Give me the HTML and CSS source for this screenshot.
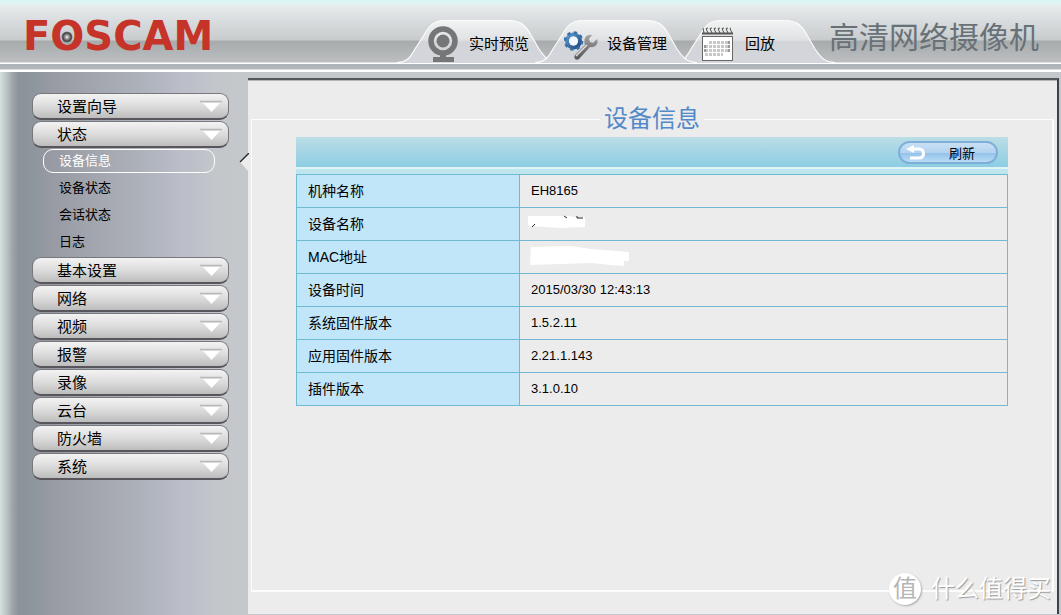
FILE: index.html
```html
<!DOCTYPE html>
<html lang="zh-CN">
<head>
<meta charset="utf-8">
<title>设备信息</title>
<link rel="stylesheet" href="styles.css">
</head>
<body>
<svg class="defs" width="0" height="0" aria-hidden="true">
  <defs>
    <linearGradient id="tabFill" x1="0" y1="0" x2="0" y2="1">
      <stop offset="0" stop-color="#f2f3f3"/>
      <stop offset=".46" stop-color="#dfe1e3"/>
      <stop offset=".5" stop-color="#d2d4d8"/>
      <stop offset="1" stop-color="#d3d6dc"/>
    </linearGradient>
    <radialGradient id="lens">
      <stop offset="0" stop-color="#f4f4f4"/>
      <stop offset=".3" stop-color="#aaa"/>
      <stop offset=".75" stop-color="#444"/>
      <stop offset="1" stop-color="#777"/>
    </radialGradient>
    <linearGradient id="gear" x1="0" y1="0" x2="1" y2="1">
      <stop offset="0" stop-color="#5c9dcb"/>
      <stop offset="1" stop-color="#1f4783"/>
    </linearGradient>
    <linearGradient id="steel" x1="0" y1="0" x2="0" y2="1">
      <stop offset="0" stop-color="#a5a5a5"/>
      <stop offset="1" stop-color="#555"/>
    </linearGradient>
    <symbol id="tabShape" viewBox="0 0 162 43">
      <path d="M0 43C10 42 13 38 18 29L27 15C33 4 38 .5 48 .5H112C122 .5 128 4 134 15L142 29C148 38 152 42 162 43Z" fill="url(#tabFill)"/>
      <path d="M0 42.500C10 42 13 38 18 29L27 15C33 4 38 .5 48 .5H112C122 .5 128 4 134 15L142 29C148 38 152 42 162 42.500" fill="none" stroke="#fbfbfb" stroke-width="1.200"/>
    </symbol>
    <symbol id="arrow" viewBox="0 0 24 14">
      <path d="M1 2.500H23" stroke="#b9b9b9" stroke-width="1.500"/>
      <path d="M4 4H21L12.500 13Z" fill="#fff"/>
    </symbol>
  </defs>
</svg>

<header class="header">
  <h1 class="logo">F<span class="logo-o">O<svg class="lens" viewBox="0 0 12 12" aria-hidden="true"><circle cx="6" cy="6" r="5.500" fill="url(#lens)"/></svg></span>SCAM</h1>
  <nav class="tabs">
    <a class="tab" href="#live">
      <svg class="tab-shape" aria-hidden="true"><use href="#tabShape"/></svg>
      <svg class="tab-icon" viewBox="0 0 34 38" aria-hidden="true">
        <circle cx="17" cy="16" r="12" fill="none" stroke="#747678" stroke-width="5.500"/>
        <circle cx="17" cy="16" r="6.500" fill="#747678"/>
        <path d="M14 29H20V32H28V37H7V32H14Z" fill="#747678"/>
      </svg>
      <span>实时预览</span>
    </a>
    <a class="tab tab-active" href="#settings">
      <svg class="tab-shape" aria-hidden="true"><use href="#tabShape"/></svg>
      <svg class="tab-icon" viewBox="0 0 34 38" aria-hidden="true">
        <circle cx="9.500" cy="16" r="6.500" fill="none" stroke="url(#gear)" stroke-width="4"/>
        <circle cx="9.500" cy="16" r="8.500" fill="none" stroke="#3a6ea6" stroke-width="2.500" stroke-dasharray="3.300 3.375"/>
        <circle cx="9.500" cy="16" r="4.500" fill="#f3f7fc"/>
        <path d="M28 10L25 14L26 17L29 18L33 14C35 19 31 23 26 22L15 34C12 36 9 33 11 30L21 20C19 14 22 9 28 10Z" fill="url(#steel)"/>
        <path d="M12 31L23 20" stroke="#e4e4e4" stroke-width="1.500"/>
      </svg>
      <span>设备管理</span>
    </a>
    <a class="tab" href="#playback">
      <svg class="tab-shape" aria-hidden="true"><use href="#tabShape"/></svg>
      <svg class="tab-icon" viewBox="0 0 34 38" aria-hidden="true">
        <rect x="0.500" y="11.500" width="30" height="24" fill="#fff" stroke="#666"/>
        <path d="M0 8.500H31" stroke="#555" stroke-width="2"/>
        <path d="M2 8L1 3M6 8L4 3.500L6 3M10 8L8 3.500L10 3M14 8L12 3.500L14 3M18 8L16 3.500L18 3M22 8L20 3.500L22 3M26 8L24 3.500L26 3M30 8L28 3.500L29 3" fill="none" stroke="#555"/>
        <path d="M7 17.500H27M3 21.500H27M3 25.500H27M3 29.500H21" stroke="#c8c8c8" stroke-width="3" stroke-dasharray="3 1"/>
        <path d="M3 20V28M27 16V27" stroke="#999" stroke-width="2" stroke-dasharray="3 1"/>
      </svg>
      <span>回放</span>
    </a>
  </nav>
  <p class="product">高清网络摄像机</p>
</header>

<div class="layout">
  <nav class="sidebar">
    <button class="menu" type="button">设置向导<svg class="arrow" aria-hidden="true"><use href="#arrow"/></svg></button>
    <button class="menu" type="button" aria-expanded="true">状态<svg class="arrow" aria-hidden="true"><use href="#arrow"/></svg></button>
    <ul class="submenu">
      <li><a class="sub sub-active" href="#info">设备信息</a></li>
      <li><a class="sub" href="#status">设备状态</a></li>
      <li><a class="sub" href="#session">会话状态</a></li>
      <li><a class="sub" href="#log">日志</a></li>
    </ul>
    <button class="menu" type="button">基本设置<svg class="arrow" aria-hidden="true"><use href="#arrow"/></svg></button>
    <button class="menu" type="button">网络<svg class="arrow" aria-hidden="true"><use href="#arrow"/></svg></button>
    <button class="menu" type="button">视频<svg class="arrow" aria-hidden="true"><use href="#arrow"/></svg></button>
    <button class="menu" type="button">报警<svg class="arrow" aria-hidden="true"><use href="#arrow"/></svg></button>
    <button class="menu" type="button">录像<svg class="arrow" aria-hidden="true"><use href="#arrow"/></svg></button>
    <button class="menu" type="button">云台<svg class="arrow" aria-hidden="true"><use href="#arrow"/></svg></button>
    <button class="menu" type="button">防火墙<svg class="arrow" aria-hidden="true"><use href="#arrow"/></svg></button>
    <button class="menu" type="button">系统<svg class="arrow" aria-hidden="true"><use href="#arrow"/></svg></button>
  </nav>

  <main class="main">
    <svg class="pointer" viewBox="0 0 10 20" aria-hidden="true"><path d="M10 0L1 9L10 19Z" fill="#ececec"/><path d="M10 0L1 9" stroke="#222" stroke-width="1.300"/></svg>
    <fieldset class="panel">
      <legend class="panel-title">设备信息</legend>
      <div class="toolbar">
        <button class="refresh" type="button">
          <svg class="refresh-icon" viewBox="0 0 20 16" aria-hidden="true"><path d="M6 4H13C19 4 19 13 13 13H4" fill="none" stroke="#fff" stroke-width="3.200"/><path d="M0 4L8 0V8Z" fill="#fff"/></svg>
          <span>刷新</span>
        </button>
      </div>
      <table class="info">
        <tr><th scope="row">机种名称</th><td>EH8165</td></tr>
        <tr><th scope="row">设备名称</th><td><svg class="mask" viewBox="0 0 110 22" aria-hidden="true"><path d="M-3 3H38L42 4H54V14L30 15L-3 13Z" fill="#fff"/><path d="M1 14L4 11M33 3L36 5M46 5H52M46 3V5" stroke="#222"/></svg></td></tr>
        <tr><th scope="row">MAC地址</th><td><svg class="mask" viewBox="0 0 110 22" aria-hidden="true"><path d="M0 1L40 0L60 3L98 6V15H93V20L80 19L60 17L-1 19Z" fill="#fff"/></svg></td></tr>
        <tr><th scope="row">设备时间</th><td>2015/03/30 12:43:13</td></tr>
        <tr><th scope="row">系统固件版本</th><td>1.5.2.11</td></tr>
        <tr><th scope="row">应用固件版本</th><td>2.21.1.143</td></tr>
        <tr><th scope="row">插件版本</th><td>3.1.0.10</td></tr>
      </table>
    </fieldset>
  </main>
</div>

<div class="watermark"><span class="watermark-badge">值</span><span>什么值得买</span></div>
</body>
</html>
```
FILE: styles.css
```css
* { box-sizing: border-box; }

body {
  margin: 0;
  min-height: 100vh;
  display: flex;
  flex-direction: column;
  position: relative;
  font-family: "Liberation Sans", "Noto Sans CJK SC", sans-serif;
  color: #000;
  background: #c4c7cb;
}

.defs { position: absolute; }

a { color: inherit; text-decoration: none; }

.header {
  height: 72px;
  display: flex;
  align-items: flex-start;
  background: linear-gradient(
    #d5f6f6 0, #e2f3f4 3px, #e7ebec 6px, #d9dddf 20px, #c9cccd 40px,
    #a7abac 41px, #bcbfc1 62px, #fff 63px, #fff 64px, #aeb3b8 64px,
    #b4b8bd 69px, #fff 70px, #fff 72px);
}

.logo {
  flex: 0 0 397px;
  margin: 0;
  padding: 14px 0 0 23px;
  font: bold 40px/44px "DejaVu Sans", sans-serif;
  color: #c53329;
}

.logo-o { position: relative; }

.lens {
  position: absolute;
  left: 11px;
  top: 18px;
  width: 12px;
  height: 12px;
}

.tabs { display: flex; padding-top: 20px; }

.tab {
  position: relative;
  z-index: 0;
  width: 138px;
  height: 43px;
  display: flex;
  align-items: center;
  gap: 9px;
  padding: 4px 0 0 29px;
  font-size: 15px;
  line-height: 20px;
}

.tab-active { z-index: 1; }

.tab-shape {
  position: absolute;
  z-index: -1;
  left: 0;
  top: 0;
  width: 162px;
  height: 43px;
}

.tab-icon { width: 34px; height: 38px; }

.product {
  margin: 0 0 0 auto;
  padding: 16px 22px 0 0;
  font-size: 30px;
  line-height: 44px;
  color: #697178;
}

.layout { flex: 1; display: flex; }

.sidebar {
  flex: 0 0 248px;
  padding: 21px 19px 0 32px;
  display: flex;
  flex-direction: column;
  background: linear-gradient(90deg,
    #d3e2df 0, #bcc8c7 6px, #9ea2a7 13px, #8a929a 19px, #8e969d 34px,
    #979aa3 50px, #b0b4bd 150px, #bbbdc8 180px, #c3c6ca 215px, #c5c8cb 248px);
}

.menu {
  height: 27px;
  margin-bottom: 1px;
  display: flex;
  align-items: center;
  justify-content: space-between;
  padding: 0 5px 0 24px;
  border: 1px solid #77787c;
  border-bottom: 2px solid #58555c;
  border-radius: 9px;
  background: linear-gradient(#f3f3f3, #dcdcdc 50%, #bdbdbd);
  font: 15px/20px "Noto Sans CJK SC", sans-serif;
  color: #000;
}

.arrow { width: 24px; height: 14px; }

.submenu { margin: 0; padding: 0 14px 0 11px; list-style: none; }

.sub {
  display: block;
  height: 24px;
  margin-bottom: 3px;
  padding-left: 15px;
  border: 1px solid transparent;
  border-radius: 10px;
  font-size: 13px;
  line-height: 21px;
}

.sub-active { color: #fff; border-color: #fff; }

.main {
  flex: 1;
  position: relative;
  display: flex;
  margin: 6px 2px 1px 0;
  padding: 24px 3px 22px;
  background: #ececec;
  border-top: 2px solid #55575b;
  border-right: 2px solid #3c434d;
  box-shadow: inset 0 1px #b5b5b7;
}

.pointer {
  position: absolute;
  left: -9px;
  top: 73px;
  width: 10px;
  height: 20px;
}

.panel {
  flex: 1;
  min-width: 0;
  margin: 0;
  padding: 3px 44px 0;
  border: 2px groove #fbfbfb;
  border-color: #fdfdfd;
  border-style: solid;
  border-width: 1px 2px 2px 1px;
  outline: 1px solid transparent;
}

.panel-title {
  margin: 0 auto;
  padding: 0 4px;
  font-size: 24px;
  line-height: 30px;
  color: #5389c9;
}

.toolbar {
  height: 37px;
  display: flex;
  justify-content: flex-end;
  align-items: flex-start;
  padding: 4px 10px 0;
  background: linear-gradient(#bcdde6 0, #8ccde3 30px, #e0f4f8 30px, #e0f4f8 32px, #bfe6ee 32px);
}

.refresh {
  width: 100px;
  height: 23px;
  display: flex;
  align-items: center;
  gap: 23px;
  padding: 0 6px;
  border: 2px solid #7eafd9;
  border-radius: 12px;
  background: linear-gradient(#c9e0f5, #b3d3f0 50%, #92c1ea 52%, #b9dcf5);
  font: 13px/18px "Noto Sans CJK SC", sans-serif;
  color: #000;
}

.refresh-icon { width: 20px; height: 16px; }

.info {
  width: 100%;
  border-collapse: collapse;
  font-size: 13px;
  line-height: 20px;
}

.info th,
.info td {
  height: 33px;
  padding: 0 11px;
  border: 1px solid #70b9d3;
  text-align: left;
}

.info th {
  width: 223px;
  background: #c1e5f9;
  font-size: 14px;
  font-weight: normal;
}

.mask { display: block; width: 110px; height: 22px; overflow: visible; }

.watermark {
  position: absolute;
  right: 10px;
  bottom: 10px;
  display: flex;
  align-items: center;
  gap: 10px;
  font-size: 24px;
  line-height: 32px;
  color: #fff;
  text-shadow: 1px 1px 1px #999;
}

.watermark-badge {
  width: 32px;
  height: 32px;
  border-radius: 50%;
  background: #fff;
  box-shadow: 1px 1px 2px #aaa;
  color: #b5b5b5;
  text-align: center;
  text-shadow: none;
}
```
